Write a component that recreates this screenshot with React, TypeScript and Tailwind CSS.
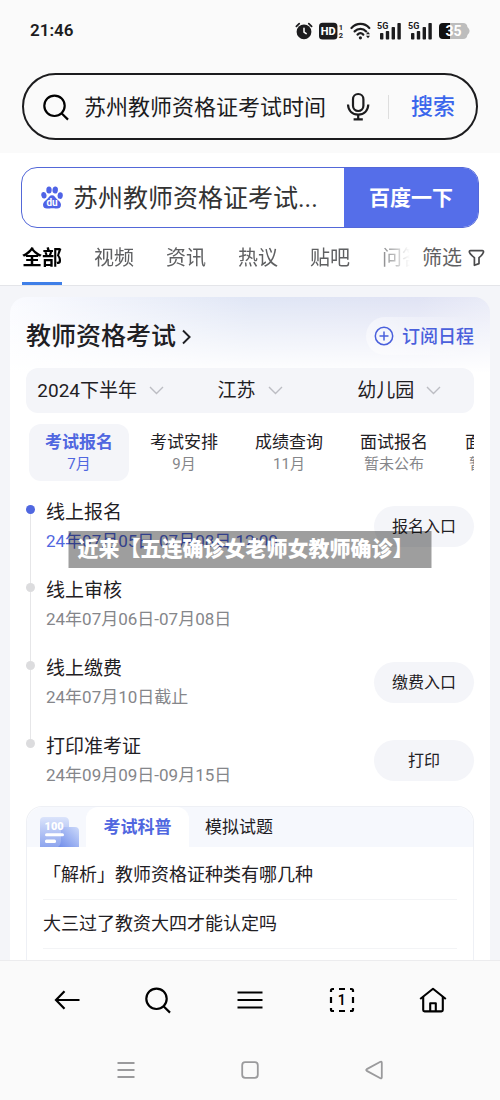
import React from 'react'

const categories = ['全部', '视频', '资讯', '热议', '贴吧', '问答']

const filters = [
  { label: '考试时间', value: '2024下半年' },
  { label: '省份', value: '江苏' },
  { label: '学段', value: '幼儿园' },
]

const stages = [
  { name: '考试报名', date: '7月' },
  { name: '考试安排', date: '9月' },
  { name: '成绩查询', date: '11月' },
  { name: '面试报名', date: '暂未公布' },
  { name: '面试安排', date: '暂未公布' },
]

const steps = [
  { name: '线上报名', date: '24年07月05日-07月08日 12:00', action: '报名入口' },
  { name: '线上审核', date: '24年07月06日-07月08日' },
  { name: '线上缴费', date: '24年07月10日截止', action: '缴费入口' },
  { name: '打印准考证', date: '24年09月09日-09月15日', action: '打印' },
]

const articles = ['「解析」教师资格证种类有哪几种', '大三过了教资大四才能认定吗']

const SearchIcon: React.FC = () => (
  <svg width="28" height="28" viewBox="0 0 28 28" fill="none" stroke="currentColor" strokeWidth="2.2">
    <circle cx="12.5" cy="12.8" r="10.2" />
    <path d="M19.5 20.3 L26 26.6" />
  </svg>
)

const Signal: React.FC = () => (
  <svg width="25" height="18" viewBox="0 0 25 18" fill="#1c1c1e">
    <text x="0" y="7.2" fontSize="9" fontWeight="700" fontFamily="Roboto, sans-serif">
      5G
    </text>
    <rect x="3" y="11" width="3.4" height="6.5" rx="0.8" />
    <rect x="8.8" y="9" width="3.4" height="8.5" rx="0.8" />
    <rect x="14.6" y="5" width="3.4" height="12.5" rx="0.8" />
    <rect x="20.4" y="1" width="3.4" height="16.5" rx="0.8" />
  </svg>
)

const StatusBar: React.FC = () => (
  <div className="flex h-[61px] items-center justify-between px-[30px] text-[#1c1c1e]">
    <span className="text-[17px] font-semibold">21:46</span>
    <div className="flex items-center gap-[6px]">
      <svg width="18" height="18" viewBox="0 0 18 18" fill="none" stroke="#1c1c1e" strokeLinecap="round">
        <circle cx="9" cy="9.8" r="7.4" fill="#1c1c1e" stroke="none" />
        <path d="M1.4 4.3 L4.2 1.6 M13.8 1.6 L16.6 4.3" strokeWidth="1.8" />
        <path d="M9 6.3 V10 L11.2 11.6" stroke="#fff" strokeWidth="1.5" />
      </svg>
      <svg width="25" height="18" viewBox="0 0 25 18" fill="#1c1c1e" fontFamily="Roboto, sans-serif">
        <rect x="0" y="0.8" width="18.4" height="16.6" rx="3.5" />
        <text x="9.2" y="13.1" textAnchor="middle" fontSize="11" fontWeight="800" fill="#fff">
          HD
        </text>
        <text x="19.8" y="7.6" fontSize="7.5" fontWeight="700">
          1
        </text>
        <text x="19.8" y="16.4" fontSize="7.5" fontWeight="700">
          2
        </text>
      </svg>
      <svg width="21" height="18" viewBox="0 0 21 18" fill="none" stroke="#1c1c1e" strokeWidth="2.2" strokeLinecap="round">
        <path d="M1.5 6 C6.5 0.6 14.5 0.6 19.3 6" />
        <path d="M4.6 9.4 C8 6 13 6 16.2 9.4" />
        <path d="M7.5 12.6 C9.3 10.9 11.6 10.9 13.3 12.6" />
        <circle cx="10.4" cy="15.8" r="1.6" fill="#1c1c1e" stroke="none" />
        <path d="M16 12.2 L18 9.8 L20 12.2 Z M16 13.8 L18 16.2 L20 13.8 Z" fill="#1c1c1e" stroke="none" />
      </svg>
      <Signal />
      <Signal />
      <svg width="31" height="18" viewBox="0 0 31 18">
        <path d="M4 1 H24 Q28 1 28.4 5 Q30.6 7 30.6 9 Q30.6 11 28.4 13 Q28 17 24 17 H4 Q0 17 0 13 V5 Q0 1 4 1 Z" fill="#bdbdbd" />
        <path d="M4 1 H11 V17 H4 Q0 17 0 13 V5 Q0 1 4 1 Z" fill="#111" />
        <text x="14.5" y="14" textAnchor="middle" fontSize="14" fontWeight="700" fill="#fff" fontFamily="Roboto, sans-serif">
          35
        </text>
      </svg>
    </div>
  </div>
)

const BrowserSearch: React.FC = () => (
  <form className="mx-[22px] mt-3 mb-[13px] flex h-[67px] items-center rounded-full border-2 border-[#1c1c1e] pr-[21px] pl-[18px]">
    <SearchIcon />
    <input
      aria-label="搜索内容"
      defaultValue="苏州教师资格证考试时间"
      className="ml-3.5 w-0 flex-1 bg-transparent pt-0.5 text-[22px] text-[#1c1c1e] outline-none"
    />
    <button type="button" aria-label="语音" className="mr-[18px]">
      <svg width="24" height="30" viewBox="0 0 24 30" fill="none" stroke="#1c1c1e" strokeWidth="2.2">
        <rect x="7" y="2" width="10.4" height="17" rx="5.2" />
        <path d="M2 12.5 C2.3 19 6.5 22.6 12.2 22.6 C17.9 22.6 22 19 22.3 12.5" />
        <path d="M12.2 22.6 V27.3 M7.6 27.3 H16.8" />
      </svg>
    </button>
    <span className="h-6 w-px bg-[#dedede]" />
    <button type="button" className="ml-[22px] text-[22px] font-medium text-[#3a66ec]">
      搜索
    </button>
  </form>
)

const BaiduSearch: React.FC = () => (
  <form className="mx-[21px] flex h-[61px] overflow-hidden rounded-2xl border border-[#5468d8] bg-white">
    <div className="flex flex-1 items-center pl-[19px]">
      <svg width="22" height="23" viewBox="0 0 22 23" fill="#4f63e6">
        <ellipse cx="2.9" cy="9.2" rx="2.6" ry="3.3" transform="rotate(-12 2.9 9.2)" />
        <ellipse cx="8" cy="4" rx="2.7" ry="3.6" />
        <ellipse cx="14.2" cy="4" rx="2.7" ry="3.6" transform="rotate(8 14.2 4)" />
        <ellipse cx="19.2" cy="9.6" rx="2.6" ry="3.3" transform="rotate(8 19.2 9.6)" />
        <path d="M11 9.2 C13.3 9.2 14.2 11.3 15.8 13 C17.6 14.8 20 16 20 18.8 C20 21.6 18 22.8 15.6 22.6 C13.6 22.4 12.6 22.2 11 22.2 C9.4 22.2 8.4 22.5 6.4 22.6 C4 22.8 2 21.6 2 18.8 C2 16 4.4 14.8 6.2 13 C7.8 11.3 8.7 9.2 11 9.2 Z" />
        <text x="11" y="20.4" textAnchor="middle" fontSize="10" fontWeight="700" fill="#fff" fontFamily="Roboto, sans-serif">
          du
        </text>
      </svg>
      <input
        aria-label="百度搜索"
        defaultValue="苏州教师资格证考试..."
        className="ml-[10px] w-0 flex-1 bg-transparent pt-0.5 text-[25px] text-[#333] outline-none"
      />
    </div>
    <button type="button" className="w-[134px] bg-[#556ee9] pt-0.5 text-[21px] font-bold text-white">
      百度一下
    </button>
  </form>
)

const CategoryTabs: React.FC = () => (
  <div className="flex h-[58px] border-b border-[#e4e5e9] pr-[15px] pl-[22px] text-[20px] text-[#5f6062]">
    <nav className="flex w-0 flex-1 gap-8 overflow-hidden [mask-image:linear-gradient(to_right,#000_350px,transparent_388px)]">
      {categories.map((name, i) => (
        <a
          key={name}
          href="#"
          className={
            i === 0
              ? 'flex shrink-0 items-center border-b-3 border-[#3f7fe8] pt-[6px] font-bold text-black'
              : 'flex shrink-0 items-center pt-[3px]'
          }
        >
          {name}
        </a>
      ))}
    </nav>
    <button type="button" className="ml-3 flex items-center gap-1.5 pt-[3px]">
      筛选
      <svg width="17" height="18" viewBox="0 0 17 18" fill="none" stroke="#4a4a4c" strokeWidth="1.7" strokeLinejoin="round">
        <path d="M2.6 1.6 H14.2 Q16 1.6 15.3 3.6 Q14.6 5.8 11 8.6 V14.6 L6.4 16.3 V8.6 Q2.6 5.8 1.6 3.6 Q0.8 1.6 2.6 1.6 Z" />
      </svg>
    </button>
  </div>
)

const Filters: React.FC = () => (
  <div className="mt-[13px] grid h-[45px] grid-cols-3 rounded-xl bg-[#f4f5f9]">
    {filters.map((f) => (
      <label key={f.label} className="flex items-center justify-center gap-3">
        <select
          aria-label={f.label}
          className="appearance-none bg-transparent pt-0.5 text-[19px] text-[#1f2024] outline-none [field-sizing:content]"
        >
          <option>{f.value}</option>
        </select>
        <svg width="15" height="9" viewBox="0 0 15 9" fill="none" stroke="#bcbdc3" strokeWidth="1.4">
          <path d="M1 1 L7.5 7.6 L14 1" />
        </svg>
      </label>
    ))}
  </div>
)

const Stages: React.FC = () => (
  <div className="mt-[11px] flex gap-[5px] overflow-hidden pl-[3px]">
    {stages.map((s, i) => (
      <button
        key={s.name}
        type="button"
        className={
          i === 0
            ? 'flex h-[57px] w-[100px] shrink-0 flex-col items-center justify-center rounded-xl bg-[#f4f5f9] text-[#5067e0]'
            : 'flex h-[57px] w-[100px] shrink-0 flex-col items-center justify-center text-[#1f2024]'
        }
      >
        <span className={i === 0 ? 'text-[17px] leading-[22px] font-bold' : 'text-[17px] leading-[22px]'}>{s.name}</span>
        <span className={i === 0 ? 'text-[15px] leading-[22px]' : 'text-[15px] leading-[22px] text-[#85868a]'}>{s.date}</span>
      </button>
    ))}
  </div>
)

const Timeline: React.FC = () => (
  <div className="relative mt-4">
    <ol>
      {steps.map((s, i) => {
        const first = i === 0
        const last = i === steps.length - 1
        return (
          <li key={s.name} className="flex">
            <div className="mr-[11px] flex w-[9px] flex-col items-center">
              <span className={first ? 'h-2 w-px' : 'h-2 w-px bg-[#e6e6e8]'} />
              <span className={first ? 'size-[9px] rounded-full bg-[#5067e0]' : 'size-[9px] rounded-full bg-[#dcdcde]'} />
              <span className={last ? 'w-px flex-1' : 'w-px flex-1 bg-[#e6e6e8]'} />
            </div>
            <div className={last ? 'flex-1' : 'flex-1 pb-[21px]'}>
              <h3 className="text-[19px] leading-[32px] text-[#1f2024]">{s.name}</h3>
              <p className={first ? 'text-[17px] leading-[25px] text-[#5067e0]' : 'text-[17px] leading-[25px] text-[#85868a]'}>
                {s.date}
              </p>
            </div>
            {s.action && (
              <button type="button" className="mt-[9px] h-[41px] w-[100px] rounded-full bg-[#f4f5f9] text-[16px] text-[#1f2024]">
                {s.action}
              </button>
            )}
          </li>
        )
      })}
    </ol>
    <p className="absolute top-[34px] left-1/2 w-max -translate-x-1/2 bg-black/38 pr-[18px] pl-[9px] text-[21px] leading-[37px] font-black text-white">
      近来【五连确诊女老师女教师确诊】
    </p>
  </div>
)

const Articles: React.FC = () => (
  <section className="mt-[18px] rounded-t-2xl border border-b-0 border-[#eef0f5]">
    <div className="flex h-10 rounded-t-2xl bg-[#f6f8fd] pl-[13px] text-[17px]">
      <svg width="39" height="31" viewBox="0 0 39 31" className="mt-[9px]">
        <defs>
          <linearGradient id="page" x1="0" y1="0" x2="0" y2="1">
            <stop offset="0" stopColor="#dbe4fb" />
            <stop offset="1" stopColor="#8ea5ee" />
          </linearGradient>
          <linearGradient id="fold" x1="1" y1="0" x2="0" y2="1">
            <stop offset="0" stopColor="#cddafa" />
            <stop offset="1" stopColor="#6f8cea" />
          </linearGradient>
        </defs>
        <path d="M4 1 H24 Q29 1 29 6 V31 H0 V5 Q0 1 4 1 Z" fill="url(#page)" />
        <path d="M24 11 H35 Q39 11 39 15 V31 H18 Q21 29 21 24 V14 Q21 11 24 11 Z" fill="url(#fold)" />
        <text x="4.5" y="14.2" fontSize="11" fontWeight="900" fill="#fff" fontFamily="Roboto, sans-serif">
          100
        </text>
        <rect x="5" y="17.3" width="19" height="3" rx="1.5" fill="#fff" />
        <rect x="5" y="23.6" width="11" height="3.4" rx="1.5" fill="#fff" />
      </svg>
      <button type="button" className="ml-[7px] w-[103px] rounded-t-xl bg-white pt-0.5 font-bold text-[#5067e0]">
        考试科普
      </button>
      <button type="button" className="ml-4 pt-0.5 text-[#1f2024]">
        模拟试题
      </button>
    </div>
    <ul className="px-4 pt-1">
      {articles.map((title) => (
        <li key={title} className="border-b border-[#f3f4f6]">
          <a href="#" className="block text-[18px] leading-[48px] text-[#1f2024]">
            {title}
          </a>
        </li>
      ))}
    </ul>
    <div className="h-10" />
  </section>
)

const BottomNav: React.FC = () => (
  <footer className="shrink-0 border-t border-[#ececee] bg-[#fafafa]">
    <nav className="grid h-[78px] grid-cols-5 place-items-center px-[21px] text-black">
      <button type="button" aria-label="返回">
        <svg width="26" height="20" viewBox="0 0 26 20" fill="none" stroke="currentColor" strokeWidth="2.2">
          <path d="M25.5 10 H2 M10.5 1.2 L2 10 L10.5 18.8" />
        </svg>
      </button>
      <button type="button" aria-label="搜索">
        <SearchIcon />
      </button>
      <button type="button" aria-label="菜单">
        <svg width="26" height="20" viewBox="0 0 26 20" stroke="currentColor" strokeWidth="2.2">
          <path d="M0.5 2.5 H25.5 M0.5 10 H25.5 M0.5 17.5 H25.5" />
        </svg>
      </button>
      <button type="button" aria-label="窗口">
        <svg width="26" height="26" viewBox="0 0 26 26" fill="none" stroke="currentColor" strokeWidth="2.2">
          <path d="M2 5 V3.5 Q2 2 3.5 2 H5 M21 2 H22.5 Q24 2 24 3.5 V5 M24 21 V22.5 Q24 24 22.5 24 H21 M5 24 H3.5 Q2 24 2 22.5 V21" />
          <path d="M10 2 H16 M10 24 H16 M2 10 V16 M24 10 V16" />
          <text x="12.8" y="18.2" textAnchor="middle" fontSize="14" fontWeight="600" fill="currentColor" stroke="none" fontFamily="Roboto, sans-serif">
            1
          </text>
        </svg>
      </button>
      <button type="button" aria-label="主页">
        <svg width="28" height="26" viewBox="0 0 28 26" fill="none" stroke="currentColor" strokeWidth="2.1" strokeLinejoin="round">
          <path d="M1.2 12 L14 1.8 L26.8 12" />
          <path d="M4.2 9.8 V23 Q4.2 24.4 5.6 24.4 H22.4 Q23.8 24.4 23.8 23 V9.8" />
          <path d="M11.2 24.4 V16.2 H16.8 V24.4" />
        </svg>
      </button>
    </nav>
    <nav className="grid h-[61px] grid-cols-3 place-items-center px-16 text-[#9a9a9c]">
      <button type="button" aria-label="最近任务">
        <svg width="18" height="18" viewBox="0 0 18 18" stroke="currentColor" strokeWidth="1.8">
          <path d="M0.5 2 H17.5 M0.5 9 H17.5 M0.5 16 H17.5" />
        </svg>
      </button>
      <button type="button" aria-label="桌面">
        <svg width="18" height="18" viewBox="0 0 18 18" fill="none" stroke="currentColor" strokeWidth="1.8">
          <rect x="1.2" y="1.2" width="15.6" height="15.6" rx="3" />
        </svg>
      </button>
      <button type="button" aria-label="上一页">
        <svg width="18" height="20" viewBox="0 0 18 20" fill="none" stroke="currentColor" strokeWidth="1.8" strokeLinejoin="round">
          <path d="M15.4 1.8 Q16.8 1.2 16.8 2.8 V17.2 Q16.8 18.8 15.4 18.2 L1.8 10.9 Q0.6 10 1.8 9.1 Z" />
        </svg>
      </button>
    </nav>
  </footer>
)

export default function App() {
  return (
    <div className="flex h-screen flex-col bg-[#f4f5f9] font-[Roboto,'Noto_Sans_CJK_SC',sans-serif]">
      <header className="shrink-0 bg-[#fafafa]">
        <StatusBar />
        <BrowserSearch />
      </header>
      <main className="min-h-0 flex-1 overflow-y-auto [scrollbar-width:none]">
        <div className="bg-white pt-3.5">
          <BaiduSearch />
          <CategoryTabs />
        </div>
        <article className="mx-[10px] mt-[11px] rounded-2xl bg-white bg-[linear-gradient(to_bottom,rgba(255,255,255,0)_0,#fff_76px),linear-gradient(to_right,#fafbff,#e0e6f5_50%,#e0e3f4_85%,#e9ebf7)] px-4 pt-5">
          <div className="flex h-[38px] items-center justify-between">
            <h2>
              <a href="#" className="flex items-center gap-[6px] pt-0.5 text-[25px] font-medium text-[#1f2024]">
                教师资格考试
                <svg width="9" height="16" viewBox="0 0 9 16" fill="none" stroke="currentColor" strokeWidth="1.9">
                  <path d="M1 1.5 L7.6 8 L1 14.5" />
                </svg>
              </a>
            </h2>
            <button
              type="button"
              className="flex h-full items-center gap-2 rounded-l-full bg-linear-to-r from-white/50 to-white/0 pl-2 text-[18px] font-medium text-[#4a60dc]"
            >
              <svg width="20" height="20" viewBox="0 0 20 20" fill="none" stroke="currentColor" strokeWidth="1.5">
                <circle cx="10" cy="10" r="8.7" />
                <path d="M10 5.5 V14.5 M5.5 10 H14.5" />
              </svg>
              订阅日程
            </button>
          </div>
          <Filters />
          <Stages />
          <Timeline />
          <Articles />
        </article>
      </main>
      <BottomNav />
    </div>
  )
}
